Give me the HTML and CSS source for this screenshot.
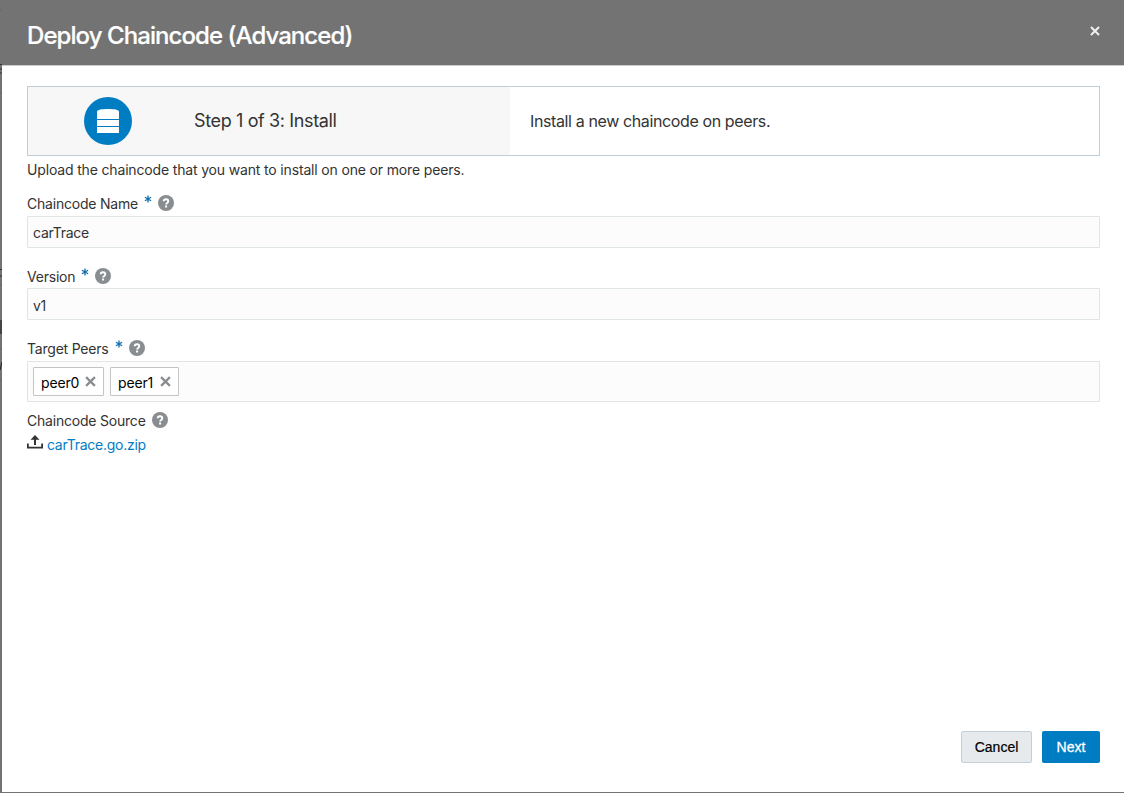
FILE: index.html
```html
<!DOCTYPE html>
<html lang="en">
<head>
<meta charset="utf-8">
<title>Deploy Chaincode (Advanced)</title>
<link rel="stylesheet" href="styles.css">
</head>
<body>
<svg class="defs" width="0" height="0" aria-hidden="true">
  <symbol id="help" viewBox="0 0 16 16"><circle cx="8" cy="8" r="8" fill="#8a8d8f"/><path d="M5.700 6.300C5.700 4.900 6.600 4.300 8 4.300s2.300.8 2.300 2c0 1.600-2.200 1.600-2.200 3.200" fill="none" stroke="#fff" stroke-width="1.900"/><rect x="7.100" y="10.500" width="2" height="2" fill="#fff"/></symbol>
  <symbol id="cross" viewBox="0 0 10 10"><path d="M1 1l8 8M9 1L1 9" fill="none" stroke="currentColor" stroke-width="2"/></symbol>
  <symbol id="star" viewBox="0 0 8 8"><path d="M4 .5V7.500M.9 2.200L7.100 5.800M7.100 2.200L.9 5.800" fill="none" stroke="#0b6fab" stroke-width="1.300"/></symbol>
</svg>
<svg class="backdrop" width="2" height="793" aria-hidden="true"><path d="M0 10h2M0 93h2M0 285h2M0 349h2M0 380h2" stroke="#666"/><path d="M0 64.500h2M0 69h2M0 73h2M0 269.500h2M0 276h2" stroke="#333"/><path d="M0 320h2v14H0z" fill="#444"/><path d="M2 362L0 370" stroke="#222"/></svg>
<main class="dialog">
  <header class="header">
    <h1 class="title">Deploy Chaincode (Advanced)</h1>
    <button class="close" aria-label="Close"><svg width="10" height="10"><use href="#cross"/></svg></button>
  </header>
  <div class="body">
    <section class="step">
      <div class="step-left">
        <svg class="step-icon" width="48" height="48" viewBox="0 0 48 48"><circle cx="24" cy="24" r="24" fill="#007cc3"/><path d="M13 14.600C13 12.800 18 12 24 12s11 .8 11 2.600V22H13zM13 23h22v6H13zM13 30h22v6H13z" fill="#fff"/></svg>
        <h2 class="step-title">Step 1 of 3: Install</h2>
      </div>
      <div class="step-text"><span>Install a new chaincode on peers.</span></div>
    </section>
    <p class="intro">Upload the chaincode that you want to install on one or more peers.</p>
    <div class="label name-label"><span>Chaincode Name</span><svg class="star" role="img" aria-label="Required"><use href="#star"/></svg><svg width="16" height="16"><use href="#help"/></svg></div>
    <div class="field">carTrace</div>
    <div class="label version-label"><span>Version</span><svg class="star" role="img" aria-label="Required"><use href="#star"/></svg><svg width="16" height="16"><use href="#help"/></svg></div>
    <div class="field version">v1</div>
    <div class="label peers-label"><span>Target Peers</span><svg class="star" role="img" aria-label="Required"><use href="#star"/></svg><svg width="16" height="16"><use href="#help"/></svg></div>
    <div class="field peers">
      <span class="chip chip-wide"><span>peer0</span><svg width="11" height="11"><use href="#cross"/></svg></span>
      <span class="chip"><span>peer1</span><svg width="11" height="11"><use href="#cross"/></svg></span>
    </div>
    <div class="label source-label"><span>Chaincode Source</span><svg width="16" height="16"><use href="#help"/></svg></div>
    <div class="upload"><svg width="16" height="14" viewBox="0 0 16 14"><path d="M8 0l4.500 4.800H9V10H7V4.800H3.500zM0 8.500h1.800v3.300h12.400V8.500H16v5H0z" fill="#333"/></svg><a class="file">carTrace.go.zip</a></div>
  </div>
  <footer class="footer"><button class="btn cancel">Cancel</button><button class="btn next">Next</button></footer>
</main>
</body>
</html>
```
FILE: styles.css
```css
* { box-sizing: border-box; margin: 0; padding: 0; }
html, body { height: 100%; }
body { background: #737373; overflow: hidden; font-family: Inter, "Liberation Sans", sans-serif; font-size: 14px; letter-spacing: -0.16px; color: #333; }
.defs { position: absolute; }
.backdrop { position: absolute; left: 0; top: 0; }
.dialog { margin-left: 2px; height: 792px; background: #fff; display: flex; flex-direction: column; }
.header { height: 66px; flex: none; background: #737373; border-bottom: 1px solid #ccc; display: flex; justify-content: space-between; padding: 0 24px 0 25px; }
.title { color: #fff; font-size: 24px; font-weight: 500; line-height: 28px; margin-top: 22px; letter-spacing: -0.93px; white-space: nowrap; -webkit-text-stroke: .2px #fff; }
.close { border: 0; background: none; color: #f0f0f0; width: 10px; height: 10px; margin-top: 26px; display: flex; }
.body { flex: 1; padding: 20px 24px 0 25px; }
.step { height: 70px; border: 1px solid #bfcdd6; display: flex; }
.step-left { width: 482px; background: #f7f7f7; display: flex; align-items: center; padding-left: 56px; }
.step-icon { flex: none; }
.step-title { font-size: 18px; font-weight: 400; margin-left: 62px; letter-spacing: -0.37px; padding-bottom: 1px; }
.step-text { display: flex; align-items: center; padding-left: 20px; font-size: 16px; letter-spacing: -0.38px; }
.intro { height: 20px; line-height: 20px; margin-top: 4px; }
.label { display: flex; height: 20px; line-height: 20px; letter-spacing: -0.21px; }
.label svg { margin-top: 1px; }
.label .star { width: 8px; height: 8px; margin: 1px 6px 0 6px; }
.name-label { margin-top: 14px; }
.version-label, .peers-label { margin-top: 19px; }
.source-label { margin-top: 9px; }
.source-label svg { margin-left: 6px; }
.field { height: 32px; margin-top: 2px; border: 1px solid #dfe4e7; background: #fcfcfc; border-radius: 1px; padding-left: 5px; line-height: 32px; letter-spacing: -0.25px; }
.version { margin-top: 1px; line-height: 34px; }
.peers { height: 41px; display: flex; gap: 6px; padding-top: 5px; letter-spacing: -0.16px; }
.chip { width: 69px; height: 29px; border: 1px solid #c4c4c4; border-radius: 1px; background: #fff; color: #000; display: flex; align-items: center; justify-content: space-between; padding: 0 7px; line-height: 29px; }
.chip > span { padding-top: 1px; }
.chip-wide { width: 71px; }
.chip svg { color: #8a8d8f; }
.upload { display: flex; height: 20px; line-height: 20px; margin-top: 4px; gap: 4px; }
.file { color: #007cc3; letter-spacing: -0.26px; }
.footer { height: 61px; flex: none; display: flex; justify-content: flex-end; gap: 10px; padding-right: 24px; }
.btn { height: 32px; border-radius: 2px; font: 14px "Liberation Sans", Arial, sans-serif; letter-spacing: 0; }
.cancel { width: 71px; border: 1px solid #c4ced7; background: #e7eaed; color: #000; -webkit-text-stroke: .2px #000; }
.next { width: 58px; border: 0; background: #007cc3; color: #fff; -webkit-text-stroke: .3px #fff; }
```
